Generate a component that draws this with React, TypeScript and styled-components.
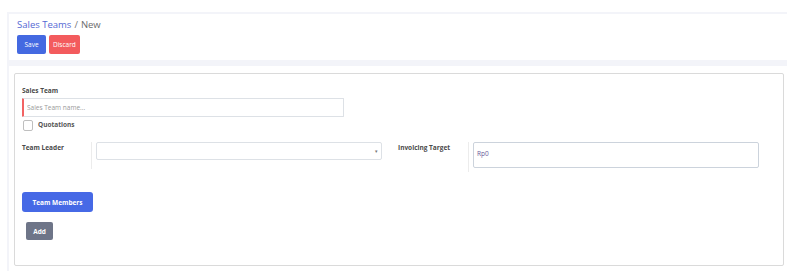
import React from 'react';
import styled, { createGlobalStyle } from 'styled-components';

const GlobalStyle = createGlobalStyle`
  body {
    margin: 0;
    background: #ffffff;
    font-family: "Open Sans", "Liberation Sans", sans-serif;
  }
  * { box-sizing: border-box; }
`;

export default function App() {
  return (
    <>
      <GlobalStyle />
      <Page>
        <ControlPanel>
          <Breadcrumb>
            <CrumbLink>Sales Teams</CrumbLink>
            <CrumbSep>/</CrumbSep>
            <CrumbCurrent>New</CrumbCurrent>
          </Breadcrumb>
          <ButtonRow>
            <SmallButton $variant="primary">Save</SmallButton>
            <SmallButton $variant="danger">Discard</SmallButton>
          </ButtonRow>
        </ControlPanel>
        <Sheet>
          <Card>
            <FieldLabel>Sales Team</FieldLabel>
            <NameInput placeholder="Sales Team name..." />
            <CheckRow>
              <CheckBox />
              <CheckLabel>Quotations</CheckLabel>
            </CheckRow>
            <FieldGrid>
              <InlineLabel>Team Leader</InlineLabel>
              <FieldCell $height={27}>
                <SelectBox>
                  <Caret>▾</Caret>
                </SelectBox>
              </FieldCell>
              <InlineLabel>Invoicing Target</InlineLabel>
              <FieldCell $height={30}>
                <AmountBox>Rp0</AmountBox>
              </FieldCell>
            </FieldGrid>
            <TabButton>Team Members</TabButton>
            <AddButton>Add</AddButton>
          </Card>
        </Sheet>
      </Page>
    </>
  );
}

const Page = styled.div`
  margin: 12px 14px 0 7px;
  width: 780px;
  background: #f3f4f9;
  padding: 2px 0 0 2px;
  display: flex;
  flex-direction: column;
  gap: 6px;
`;

const ControlPanel = styled.div`
  background: #ffffff;
  height: 46px;
  padding: 4px 8px 0 8px;
`;

const Breadcrumb = styled.div`
  display: flex;
  align-items: baseline;
  gap: 3px;
  font-size: 9.5px;
  line-height: 14px;
`;

const CrumbLink = styled.span`
  color: #5468d4;
`;

const CrumbSep = styled.span`
  color: #777;
`;

const CrumbCurrent = styled.span`
  color: #6c6c6c;
`;

const ButtonRow = styled.div`
  display: flex;
  gap: 3px;
  margin-top: 3px;
`;

const SmallButton = styled.button<{ $variant: 'primary' | 'danger' }>`
  border: none;
  border-radius: 2px;
  height: 19px;
  padding: 0 4px;
  min-width: 29px;
  font-family: inherit;
  font-size: 6.5px;
  color: #ffffff;
  background: ${(p) => (p.$variant === 'primary' ? '#4469e1' : '#f35b5d')};
`;

const Sheet = styled.div`
  background: #ffffff;
  padding: 7px 3px 5px 5px;
`;

const Card = styled.div`
  border: 1px solid #dadada;
  border-radius: 2px;
  height: 193px;
  padding: 12px 7px 0 7px;
  display: flex;
  flex-direction: column;
  align-items: flex-start;
`;

const FieldLabel = styled.div`
  font-size: 6.5px;
  font-weight: 700;
  color: #4a4a4a;
  line-height: 9px;
`;

const NameInput = styled.input`
  margin-top: 3px;
  width: 322px;
  height: 19px;
  border: 1px solid #dde1e6;
  border-left: 2px solid #f26363;
  border-radius: 1px;
  padding: 0 3px;
  font-family: inherit;
  font-size: 6.5px;
  outline: none;
  &::placeholder {
    color: #9a9a9a;
  }
`;

const CheckRow = styled.div`
  display: flex;
  align-items: center;
  gap: 5px;
  margin-top: 3px;
  margin-left: 1px;
`;

const CheckBox = styled.span`
  width: 10px;
  height: 11px;
  border: 1px solid #bfbfbf;
  border-radius: 2px;
  background: #fff;
`;

const CheckLabel = styled.span`
  font-size: 6.5px;
  font-weight: 700;
  color: #555;
  margin-top: -3px;
`;

const FieldGrid = styled.div`
  display: grid;
  grid-template-columns: 69px 291px 86px 290px;
  align-items: start;
  margin-top: 11px;
`;

const InlineLabel = styled.div`
  font-size: 6.5px;
  font-weight: 700;
  color: #4a4a4a;
  padding-top: 1px;
  &:nth-of-type(3) {
    padding-left: 16px;
  }
`;

const FieldCell = styled.div<{ $height: number }>`
  border-left: 1px solid #ececec;
  padding-left: 4px;
  height: ${(p) => p.$height}px;
`;

const SelectBox = styled.div`
  width: 286px;
  height: 18px;
  border: 1px solid #dde1e6;
  border-radius: 2px;
  display: flex;
  justify-content: flex-end;
  align-items: center;
  padding-right: 3px;
`;

const Caret = styled.span`
  font-size: 5px;
  color: #777;
`;

const AmountBox = styled.div`
  width: 286px;
  height: 26px;
  border: 1px solid #ccd3dc;
  border-radius: 2px;
  padding: 6px 3px 0 3px;
  font-size: 6.5px;
  color: #6a5a9a;
`;

const TabButton = styled.button`
  margin-top: 20px;
  width: 71px;
  height: 20px;
  border: none;
  border-radius: 3px;
  background: #4669e6;
  color: #fff;
  font-family: inherit;
  font-size: 6.5px;
  font-weight: 700;
`;

const AddButton = styled.button`
  margin-top: 10px;
  margin-left: 4px;
  width: 27px;
  height: 18px;
  border: none;
  border-radius: 2px;
  background: #6e7588;
  color: #fff;
  font-family: inherit;
  font-size: 6.5px;
  font-weight: 700;
`;
